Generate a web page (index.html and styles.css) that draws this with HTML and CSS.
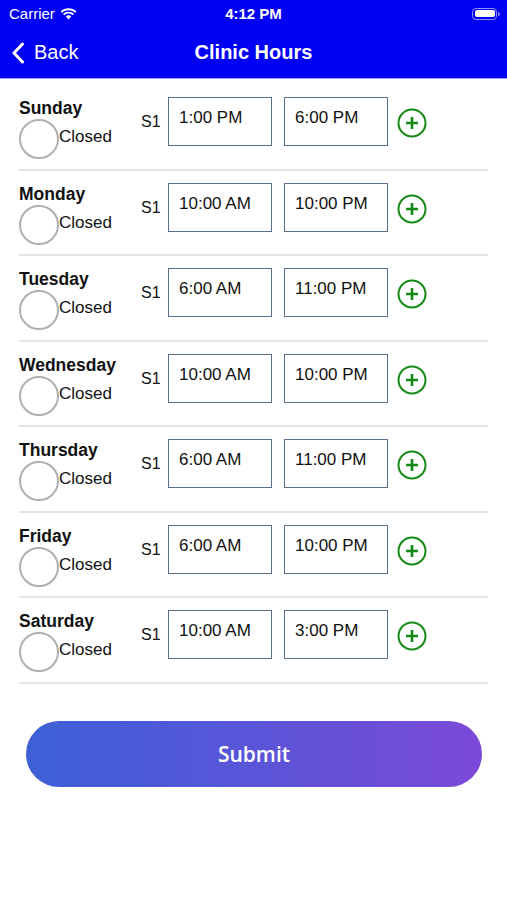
FILE: index.html
```html
<!DOCTYPE html>
<html lang="en">
<head>
  <meta charset="UTF-8" />
  <title>Clinic Hours</title>
  <link rel="stylesheet" href="styles.css">
</head>
<body>
  <header class="top-bar">
    <div class="status-bar">
      <div class="carrier">
        Carrier
        <svg class="wifi" width="17" height="12" viewBox="0 0 17 12">
          <path d="M8.5 2.2c2.6 0 4.9 1 6.6 2.6l1.3-1.4C14.3 1.4 11.5.2 8.5.2S2.7 1.4.6 3.4l1.3 1.4C3.6 3.2 5.9 2.2 8.5 2.2z" fill="#fff"/>
          <path d="M8.5 5.6c1.6 0 3.1.6 4.2 1.6l1.3-1.4C12.6 4.5 10.6 3.7 8.5 3.7S4.4 4.5 3 5.8l1.3 1.4c1.1-1 2.6-1.6 4.2-1.6z" fill="#fff"/>
          <path d="M8.5 7.3c-1.1 0-2.1.4-2.8 1.1l2.8 3.1 2.8-3.1c-.7-.7-1.700-1.1-2.8-1.1z" fill="#fff"/>
        </svg>
      </div>
      <div class="clock">4:12 PM</div>
      <div class="battery"><span class="battery-level"></span></div>
    </div>
    <nav class="nav-bar">
      <a class="back">
        <svg width="14" height="22" viewBox="0 0 14 22">
          <path d="M11.5 2 L3 11 L11.5 20" fill="none" stroke="#fff" stroke-width="3" stroke-linecap="round" stroke-linejoin="round"/>
        </svg>
        Back
      </a>
      <h1 class="title">Clinic Hours</h1>
    </nav>
  </header>

  <main class="hours-list" id="hoursList"></main>

  <div class="submit-wrap">
    <button class="submit-btn">Submit</button>
  </div>

  <script>
    const hours = [
      ['Sunday', '1:00 PM', '6:00 PM'],
      ['Monday', '10:00 AM', '10:00 PM'],
      ['Tuesday', '6:00 AM', '11:00 PM'],
      ['Wednesday', '10:00 AM', '10:00 PM'],
      ['Thursday', '6:00 AM', '11:00 PM'],
      ['Friday', '6:00 AM', '10:00 PM'],
      ['Saturday', '10:00 AM', '3:00 PM']
    ];

    const list = document.getElementById('hoursList');

    hours.forEach(([day, open, close]) => {
      const row = document.createElement('div');
      row.className = 'day-row';
      row.innerHTML = `
        <div class="day-col">
          <div class="day-name">${day}</div>
          <div class="closed">
            <span class="radio"></span>
            <span class="closed-label">Closed</span>
          </div>
        </div>
        <div class="slot-label">S1</div>
        <div class="time-box">${open}</div>
        <div class="time-box">${close}</div>
        <svg class="add" width="30" height="30" viewBox="0 0 30 30">
          <circle cx="15" cy="15" r="13.5" fill="none" stroke="#148a14" stroke-width="2"/>
          <path d="M15 9v12M9 15h12" stroke="#148a14" stroke-width="2.6"/>
        </svg>`;
      list.appendChild(row);
    });
  </script>
</body>
</html>
```

FILE: styles.css
```css
* {
  box-sizing: border-box;
}

body {
  margin: 0;
  font-family: 'Liberation Sans', Arial, sans-serif;
  background: #fff;
  color: #111;
}

.top-bar {
  background: #0000f5;
  color: #fff;
  border-bottom: 1px solid #9a9aff;
}

.status-bar {
  height: 27px;
  display: flex;
  align-items: center;
  justify-content: space-between;
  padding: 0 10px 0 9px;
  font-size: 15px;
  position: relative;
}

.carrier {
  display: flex;
  align-items: center;
  gap: 5px;
}

.clock {
  position: absolute;
  left: 0;
  right: 0;
  text-align: center;
  font-weight: bold;
}

.battery {
  width: 25px;
  height: 12px;
  border: 1.5px solid rgba(255,255,255,0.55);
  border-radius: 4px;
  padding: 1.5px;
  position: relative;
}

.battery::after {
  content: '';
  position: absolute;
  right: -4px;
  top: 3px;
  width: 2px;
  height: 4px;
  background: rgba(255,255,255,0.55);
  border-radius: 0 2px 2px 0;
}

.battery-level {
  display: block;
  height: 100%;
  background: #fff;
  border-radius: 2px;
}

.nav-bar {
  height: 51px;
  display: flex;
  align-items: center;
  position: relative;
  padding-left: 11px;
}

.back {
  display: flex;
  align-items: center;
  gap: 9px;
  font-size: 20px;
  color: #fff;
}

.title {
  position: absolute;
  left: 0;
  right: 0;
  margin: 0;
  text-align: center;
  font-size: 20px;
  font-weight: bold;
  pointer-events: none;
}

.hours-list {
  padding: 6px 19px 0;
}

.day-row {
  display: flex;
  align-items: flex-start;
  padding: 12px 0 22px;
  border-bottom: 2px solid #e4e4e4;
  height: 85.5px;
}

.day-col {
  width: 122px;
  flex-shrink: 0;
  margin-top: 1px;
}

.day-name {
  font-size: 17.5px;
  font-weight: bold;
  line-height: 21px;
}

.closed {
  display: flex;
  align-items: center;
}

.radio {
  width: 40px;
  height: 40px;
  border: 2px solid #b0b0b0;
  border-radius: 50%;
}

.closed-label {
  font-size: 17px;
  margin-top: -4px;
}

.slot-label {
  font-size: 16px;
  width: 27px;
  margin-top: 16px;
}

.time-box {
  width: 104px;
  height: 49px;
  border: 1px solid #566f8e;
  padding: 10px 0 0 10px;
  font-size: 17px;
  margin-right: 12px;
}

.add {
  margin: 11px 0 0 -3px;
}

.submit-wrap {
  padding: 37px 25px 0 26px;
}

.submit-btn {
  width: 100%;
  height: 66px;
  border: none;
  border-radius: 33px;
  background: linear-gradient(90deg, #3d60d6, #5a55d8 50%, #7c49d9);
  color: #fff;
  font-family: 'Open Sans', sans-serif;
  font-size: 21px;
  font-weight: 600;
}
```
